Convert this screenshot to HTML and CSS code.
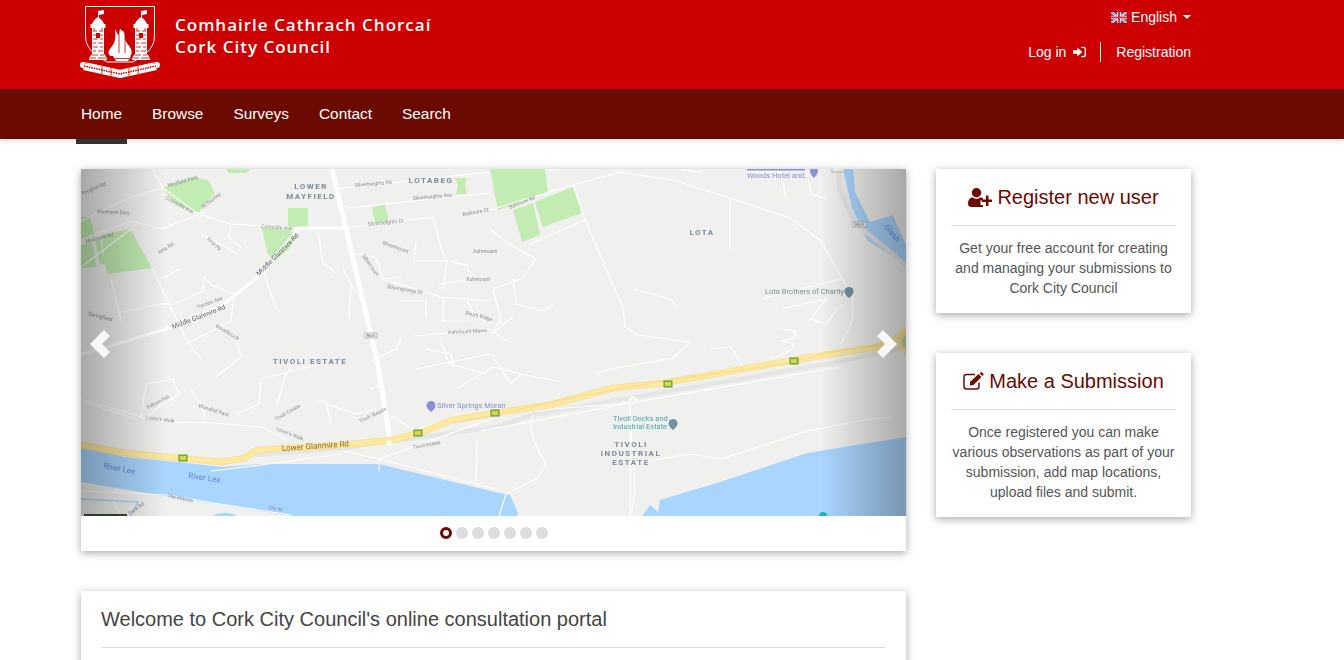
FILE: index.html
```html
<!DOCTYPE html>
<html lang="en">
<head>
<meta charset="utf-8">
<title>Cork City Council</title>
<link rel="stylesheet" href="styles.css">
</head>
<body>
<header class="top">
  <div class="wrap top-inner">
    <a class="brand" href="#">
      <svg class="crest" viewBox="0 0 80 72" width="80" height="72" aria-label="Cork City Council crest">
        <path class="crest-line" d="M5.500 .5H74.500V30C74.500 44 63 50 53 56H27C17 50 5.500 44 5.500 30Z"/>
        <g>
          <path class="crest-fill" d="M18 5l6-1v4l-5 1v3h-1z"/>
          <path class="crest-fill" d="M18 11c-3 2-5 4-6 7h12c-1-3-3-5-6-7zM10.500 18h15v4h-15zM12 22h12v26c2 2 3 4 3 6H9c0-2 1-4 3-6z"/>
          <path class="crest-cut" d="M13 25h4M19 25h4M13 29h3M18 29h5M13 33h5M20 33h3M13 37h3M18 37h5M13 41h5M20 41h3M13 45h3M18 45h5M12 49h6M20 49h4M10 52h6M18 52h8M14 22v3M22 22v3"/>
          <path class="crest-hole" d="M16 27h4v5h-4z"/>
        </g>
        <g transform="translate(43 0)">
          <path class="crest-fill" d="M18 5l6-1v4l-5 1v3h-1z"/>
          <path class="crest-fill" d="M18 11c-3 2-5 4-6 7h12c-1-3-3-5-6-7zM10.500 18h15v4h-15zM12 22h12v26c2 2 3 4 3 6H9c0-2 1-4 3-6z"/>
          <path class="crest-cut" d="M13 25h4M19 25h4M13 29h3M18 29h5M13 33h5M20 33h3M13 37h3M18 37h5M13 41h5M20 41h3M13 45h3M18 45h5M12 49h6M20 49h4M10 52h6M18 52h8M14 22v3M22 22v3"/>
          <path class="crest-hole" d="M16 27h4v5h-4z"/>
        </g>
        <path class="crest-fill" d="M35 23l3 6 1-1 1-5 4 3 1 7c1 4 4 6 6 10 1 3 1 6-1 7H31c-3-1-3-4-1-7 2-3 4-5 5-9 1-4 0-7 0-11z"/>
        <path class="crest-fill" d="M33 50h18l-3 5H36z"/>
        <path class="crest-cut" d="M35 52.500h14M39 27v20M45 31v16"/>
        <path class="scroll-band" d="M4 60L22 64 40 68 58 64 76 60"/>
        <circle class="crest-fill" cx="3" cy="59" r="3"/>
        <circle class="crest-fill" cx="77" cy="59" r="3"/>
        <path class="scroll-text" d="M4 60L22 64 40 68 58 64 76 60"/>
        <path class="crest-cut" d="M22 60v8M31 62v8M49 62v8M58 60v8M9 55l-4 3M71 55l4 3"/>
      </svg>
      <span class="brand-name"><span>Comhairle Cathrach Chorcaí</span><span>Cork City Council</span></span>
    </a>
    <div class="account">
      <a class="lang" href="#">
        <svg class="flag" viewBox="0 0 16 11" width="16" height="11" aria-hidden="true">
          <rect width="16" height="11" fill="#2b4a8c"/>
          <path d="M0 0L16 11M16 0L0 11" stroke="#fff" stroke-width="2.200"/>
          <path d="M0 0L16 11M16 0L0 11" stroke="#d8324a" stroke-width=".8"/>
          <path d="M8 0V11M0 5.500H16" stroke="#fff" stroke-width="3.600"/>
          <path d="M8 0V11M0 5.500H16" stroke="#d8324a" stroke-width="2"/>
        </svg>
        <span>English</span><i class="caret"></i>
      </a>
      <div class="auth">
        <a class="login" href="#">Log in
          <svg class="ico-login" viewBox="0 0 14 12" width="13" height="12" aria-hidden="true">
            <path d="M0 4H4.500V1.200L10 6 4.500 10.800V8H0z" fill="#fff"/>
            <path d="M9 1H11.500C12.600 1 13.300 1.800 13.300 3V9C13.300 10.200 12.600 11 11.500 11H9" fill="none" stroke="#fff" stroke-width="1.500"/>
          </svg>
        </a>
        <a class="register" href="#">Registration</a>
      </div>
    </div>
  </div>
</header>
<nav class="menu">
  <ul class="wrap menu-list">
    <li class="menu-item active"><a href="#">Home</a></li>
    <li class="menu-item"><a href="#">Browse</a></li>
    <li class="menu-item"><a href="#">Surveys</a></li>
    <li class="menu-item"><a href="#">Contact</a></li>
    <li class="menu-item"><a href="#">Search</a></li>
  </ul>
</nav>
<main class="wrap page">
  <div class="main-col">
    <section class="card carousel">
      <div class="slide">
        <svg class="map" viewBox="0 0 825 347" width="825" height="347" role="img" aria-label="Map of Tivoli and Lota, Cork">
          <rect class="land" width="825" height="347"/>
          <g class="blurred">
            <path class="park" d="M81 19L112 8 127 11 134 24 117 44 96 36ZM181 59L207 61 216 64 209 79 192 93 186 83ZM207 39H227V58H207ZM291 38L304 36 308 53 294 54ZM374 9H386L384 17 386 25H375L377 17ZM409 0H464L467 24 417 41ZM454 33L492 18 501 44 462 58ZM432 41L452 34 459 66 441 73ZM21 66L49 60 71 99 27 105 24 96ZM0 48H9L14 68 0 71ZM0 76L11 73 16 98 0 99ZM14 71L19 70 24 95 19 96ZM145 0H170L165 4 148 4Z"/>
            <path class="water" d="M0 279L44 288 97 293 141 298 181 295 298 295 414 323 429 326 437 344 436 347H211L77 326 0 313ZM561 347L569 336 577 343 579 331 639 313 726 284 825 268V347ZM762 0H772L774 23 789 53 812 46 825 76V96L786 71 771 39ZM132 347C136 343 152 343 156 347Z"/>
            <path class="water-line" d="M0 330L57 333 50 347"/>

            <g class="road-grey">
              <path d="M174 286L261 279 414 258 452 246 549 229 752 194 825 178"/>
              <path d="M758 0V20L775 55 825 96"/>
            </g>
            <g class="road-big">
              <path d="M251 0L297 196 309 271"/>
              <path d="M-1 186L92 158 142 136 179 106 216 61"/>
              <path d="M216 59H262"/>
            </g>
            <g class="road">
              <path d="M71 0L82 19 116 44 149 55 216 59M262 59L352 48M256 20L409 3M266 39L409 24"/>
              <path d="M0 52L50 28 82 19M0 71L50 52 80 60 124 43M0 98L50 60M71 99L105 170 120 190M80 110L99 100M94 135L122 122 123 108 131 116 153 125M105 175L150 152 153 125M30 110L40 152M36 144L80 135 92 135"/>
              <path d="M120 65L157 85M150 60L147 68 160 78 156 82M180 95L195 140M237 64L242 94 255 104M262 100L275 125M270 118L268 150M135 160L155 168 160 188 135 208"/>
              <path d="M352 48L362 85 366 92 362 120M335 72L333 92 366 92M275 85L295 88 302 110 320 108M300 110L335 120 360 128 409 132M368 92L386 96 391 110 358 115M320 132H345V150M362 128V152H385M386 132L395 148 412 154M333 167L409 160 425 172M345 180L370 185 372 195M290 192L315 180 320 170"/>
              <path d="M0 230L60 248 90 253 135 254 180 258 205 270M0 232L55 250M60 248L65 215 92 210 98 225 75 240 64 250M110 220L122 240 125 250M155 245L178 235 180 210 240 195M196 235L205 205 218 190M235 232H245L250 255M245 235L275 245 295 240M290 220L302 215"/>
              <path d="M310 247L335 262M309 270L380 245M335 200L410 185 430 215 440 205 475 212M360 172L368 195 405 205M375 220L412 198 440 205"/>
              <path d="M409 41L492 16 539 3 592 11 649 29 709 49 739 71 772 129 771 152 760 175M492 16L504 51 542 139 544 158 556 166 609 173 592 189 530 200 515 205M504 51L447 76M464 0L480 0M409 60L428 75 455 90 440 110 412 120 420 150 410 165 432 148M432 110L435 135 462 142 472 135M600 0L620 4M649 29V80M665 3L700 3 705 30M726 3L730 25 745 30M552 120L590 130 597 140M700 160C720 160 720 170 700 172 730 175 700 185 690 190M628 180L650 178 660 195"/>
              <path d="M0 322L87 326 132 334 210 346M32 332L40 347M409 245L549 234M549 234L759 198M400 262L549 234 540 232M549 234C549 290 550 310 549 347 560 310 549 290 549 234M452 246C445 265 460 285 465 295L455 310 425 325M425 325L418 347M549 295L610 285 640 290 726 262 790 250 810 248M298 302L298 290M261 282L298 290 410 250M298 290L414 320M396 272L395 312M130 302L180 296 260 285"/>
              <path d="M680 130L760 110M700 140L745 130 730 150 745 155 760 135"/>
            </g>
            <path class="motorway-edge" d="M0 276L44 284 97 289 141 293 164 289 176 281 261 276 311 271 341 263 371 251 414 244 469 236 532 219 582 214 702 193 756 184 796 178 815 170 825 160"/>
            <path class="motorway" d="M0 276L44 284 97 289 141 293 164 289 176 281 261 276 311 271 341 263 371 251 414 244 469 236 532 219 582 214 702 193 756 184 796 178 815 170 825 160"/>
            <path class="motorway-line" d="M370 254L414 246 469 233 532 221 582 212 702 195 756 182 800 176"/>
            <circle class="roundabout" cx="830" cy="173" r="11"/>
            <circle class="junction" cx="308" cy="274" r="2.500"/>
            <circle class="junction-ring" cx="552" cy="231" r="3"/>
            <rect class="bar-dark" x="3" y="345" width="43" height="2"/>

            <g class="shield">
              <rect x="98" y="286" width="8" height="6"/><text x="102" y="291">N8</text>
              <rect x="333" y="261" width="8" height="6"/><text x="337" y="266">N8</text>
              <rect x="410" y="241" width="8" height="6"/><text x="414" y="246">N8</text>
              <rect x="583" y="212" width="8" height="6"/><text x="587" y="217">N8</text>
              <rect x="709" y="189" width="8" height="6"/><text x="713" y="194">N8</text>
            </g>
            <g class="shield-r">
              <rect x="284" y="164" width="12" height="5"/><text x="290" y="168">R635</text>
              <rect x="772" y="53" width="13" height="5"/><text x="778.500" y="57">R639</text>
              <rect x="751" y="-2" width="13" height="5"/>
            </g>
            <g class="district">
              <text x="230" y="20">LOWER</text><text x="230" y="30">MAYFIELD</text>
              <text x="350" y="14">LOTABEG</text><text x="229" y="195">TIVOLI ESTATE</text>
              <text x="621" y="66">LOTA</text>
              <text x="550" y="278">TIVOLI</text><text x="550" y="287">INDUSTRIAL</text><text x="550" y="296">ESTATE</text>
            </g>
            <g class="street">
              <text transform="translate(92 160) rotate(-21)">Middle Glanmire Rd</text>
              <text transform="translate(178 107) rotate(-45)">Middle Glanmire Rd</text>
            </g>
            <g class="lane">
              <text transform="translate(1 26) rotate(-22)">Youghal Rd</text>
              <text transform="translate(16 44) rotate(3)">Murmont Dws</text>
              <text transform="translate(5 74) rotate(-14)">Murmont Rd</text>
              <text transform="translate(87 18) rotate(-15)">Mayfield Park</text>
              <text transform="translate(84 30) rotate(28)">Colmcille Ave</text>
              <text transform="translate(180 59) rotate(4)">Colmcille Ave</text>
              <text transform="translate(122 40) rotate(-38)">St Stanley</text>
              <text transform="translate(78 85) rotate(-30)">Iona Rd</text>
              <text transform="translate(126 70) rotate(45)">Iona Pk</text>
              <text transform="translate(116 140) rotate(-20)">Tracton Ave</text>
              <text transform="translate(7 146) rotate(15)">Springfield</text>
              <text transform="translate(134 158) rotate(30)">Woodbrook</text>
              <text transform="translate(274 18) rotate(-5)">Silverheights Rd</text>
              <text transform="translate(332 31) rotate(-5)">Silverheights Ave</text>
              <text transform="translate(287 57) rotate(-6)">Silverheights Dr</text>
              <text transform="translate(382 47) rotate(-10)">Ballinure Ct</text>
              <text transform="translate(301 75) rotate(20)">Silvermount</text>
              <text transform="translate(281 87) rotate(55)">Silvercourt</text>
              <text transform="translate(306 119) rotate(10)">Silversprings Dr</text>
              <text transform="translate(392 84)">Ashmount</text>
              <text transform="translate(385 112)">Ashmount</text>
              <text transform="translate(384 145) rotate(15)">South Ridge</text>
              <text transform="translate(367 165) rotate(-3)">Ashmount Mews</text>
              <text transform="translate(429 40) rotate(-22)">Ballinure Rd</text>
              <text transform="translate(67 240) rotate(-27)">Falcon Hill</text>
              <text transform="translate(117 238) rotate(18)">Woodhill Park</text>
              <text transform="translate(65 250) rotate(8)">Lover's Walk</text>
              <text transform="translate(195 261) rotate(22)">Lover's Walk</text>
              <text transform="translate(195 252) rotate(-30)">Tivoli Estate</text>
              <text transform="translate(279 254) rotate(-25)">Tivoli Woods</text>
              <text transform="translate(332 280) rotate(-10)">Tivoli Estate</text>
              <text transform="translate(86 328) rotate(12)">The Marina</text>
              <text transform="translate(187 340) rotate(10)">The M</text>
              <text transform="translate(49 346) rotate(-35)">Park Rd</text>
            </g>
            <text class="glanmire" transform="translate(201 282) rotate(-4)">Lower Glanmire Rd</text>
            <g class="river">
              <text transform="translate(22 299) rotate(11)">River Lee</text>
              <text transform="translate(107 309) rotate(8)">River Lee</text>
              <text transform="translate(803 58) rotate(52)">Glash</text>
            </g>
            <g class="poi-hotel">
              <text x="666" y="9">Woods Hotel and...</text>
              <rect x="666" y="0" width="58" height="1.500"/>
              <text x="356" y="239">Silver Springs Moran</text>
              <path d="M733 -2a4 4 0 0 1 4 4c0 3-4 7-4 7s-4-4-4-7a4 4 0 0 1 4-4z"/>
              <path d="M350 232a4.500 4.500 0 0 1 4.500 4.500c0 3-4.500 6.500-4.500 6.500s-4.500-3.500-4.500-6.500a4.500 4.500 0 0 1 4.500-4.500z"/>
            </g>
            <g class="poi-dock">
              <text x="532" y="252">Tivoli Docks and</text>
              <text x="532" y="260">Industrial Estate</text>
              <circle cx="742" cy="347" r="4"/>
            </g>
            <g class="poi-grey">
              <text x="684" y="125">Lota Brothers of Charity</text>
              <path d="M768 118a4.500 4.500 0 0 1 4.500 4.500c0 3-4.500 6.500-4.500 6.500s-4.500-3.500-4.500-6.500a4.500 4.500 0 0 1 4.500-4.500z"/>
              <path d="M592 250a4.500 4.500 0 0 1 4.500 4.500c0 3-4.500 6.500-4.500 6.500s-4.500-3.500-4.500-6.500a4.500 4.500 0 0 1 4.500-4.500z"/>
            </g>
          </g>
        </svg>
        <a class="control control-left" href="#" aria-label="Previous">
          <svg viewBox="0 0 20 28" width="20" height="28" aria-hidden="true"><path d="M14 0L20 6 12 14 20 22 14 28 0 14Z"/></svg>
        </a>
        <a class="control control-right" href="#" aria-label="Next">
          <svg viewBox="0 0 20 28" width="20" height="28" aria-hidden="true"><path d="M6 0L0 6 8 14 0 22 6 28 20 14Z"/></svg>
        </a>
      </div>
      <div class="dots">
        <span class="dot on"></span><span class="dot"></span><span class="dot"></span><span class="dot"></span><span class="dot"></span><span class="dot"></span><span class="dot"></span>
      </div>
    </section>
    <section class="card welcome">
      <h1 class="welcome-title">Welcome to Cork City Council's online consultation portal</h1>
      <hr class="rule">
    </section>
  </div>
  <aside class="side-col">
    <section class="card promo">
      <h2 class="promo-title">
        <svg viewBox="0 0 24 19" width="24" height="19" aria-hidden="true">
          <circle cx="8.500" cy="4.700" r="4.700"/>
          <path d="M0 15.500C0 12 2 9.800 4.500 9.300 6 10.600 7.200 11 8.500 11S11 10.600 12.500 9.300C13.500 9.500 14.300 10 15 10.600V12.500H12.500V17H15V19H3C1 19 0 17.500 0 15.500Z"/>
          <path d="M18 7.500H20.500V11.500H24V14H20.500V18H18V14H14V11.500H18Z"/>
        </svg>
        <span>Register new user</span>
      </h2>
      <hr class="rule">
      <p class="promo-text">Get your free account for creating and managing your submissions to Cork City Council</p>
    </section>
    <section class="card promo">
      <h2 class="promo-title">
        <svg viewBox="0 0 21 18" width="21" height="18" aria-hidden="true">
          <path class="edit-box" d="M16 10.500V14.500C16 16 15 17 13.500 17H3.500C2 17 1 16 1 14.500V5C1 3.500 2 2.500 3.500 2.500H12"/>
          <path d="M7 10L15.500 2 18.500 5 10.500 13 7 13.500Z"/>
          <path d="M16.500 1.200L17.500 .4C18 0 18.500 .1 19 .5L20.300 1.800C20.700 2.200 20.700 2.800 20.300 3.200L19.500 4Z"/>
        </svg>
        <span>Make a Submission</span>
      </h2>
      <hr class="rule">
      <p class="promo-text">Once registered you can make various observations as part of your submission, add map locations, upload files and submit.</p>
    </section>
  </aside>
</main>
</body>
</html>
```
FILE: styles.css
```css
* { box-sizing: border-box; }
html, body { height: 660px; overflow: hidden; }
body { margin: 0; background: #fff; font-family: "Liberation Sans", Arial, sans-serif; font-size: 14px; color: #555; }
a { color: inherit; text-decoration: none; }

.wrap { width: 1140px; margin-left: 66px; padding: 0 15px; }

.top { height: 89px; background: #cc0000; color: #fff; }
.top-inner { display: flex; justify-content: space-between; height: 89px; }
.brand { display: flex; align-items: flex-start; gap: 15px; margin-left: -1px; padding-top: 6px; }
.crest { display: block; flex: none; }
.crest-line { fill: none; stroke: #fff; stroke-width: 1; }
.crest-fill { fill: #fff; }
.crest-cut { fill: none; stroke: #cc0000; stroke-width: .8; }
.crest-hole { fill: #cc0000; }
.scroll-band { fill: none; stroke: #fff; stroke-width: 8; }
.scroll-text { fill: none; stroke: #cc0000; stroke-width: 1.600; stroke-dasharray: 1.500 1; }
.brand-name { display: flex; flex-direction: column; padding-top: 8px; font-family: "Open Sans", sans-serif; font-size: 17px; font-weight: 600; line-height: 22px; letter-spacing: 1px; white-space: nowrap; }

.account { display: flex; flex-direction: column; align-items: flex-end; }
.lang { display: flex; align-items: center; height: 20px; margin-top: 7px; }
.flag { display: block; margin-right: 4px; }
.caret { width: 0; height: 0; margin-left: 6px; border-top: 4px solid #fff; border-left: 4px solid transparent; border-right: 4px solid transparent; }
.auth { display: flex; align-items: center; height: 20px; margin-top: 15px; }
.login { display: flex; align-items: center; gap: 7px; padding-right: 14px; border-right: 1px solid #fff; height: 20px; }
.register { padding-left: 15px; }
.ico-login { display: block; }

.menu { height: 50px; background: #6b0a00; box-shadow: 0 2px 4px rgba(0, 0, 0, .15); }
.menu-list { display: flex; list-style: none; margin-top: 0; margin-bottom: 0; padding: 0; }
.menu-item { position: relative; margin-left: 10px; margin-right: 10px; padding: 0 5px; font-size: 15.400px; line-height: 50px; color: #fff; }
.menu-item.active::after { content: ""; position: absolute; left: 0; right: 0; top: 50px; height: 5px; background: #333; }

.page { display: flex; gap: 30px; padding-top: 30px; }
.main-col { width: 825px; flex: none; display: flex; flex-direction: column; gap: 40px; }
.side-col { width: 255px; flex: none; display: flex; flex-direction: column; gap: 40px; }
.card { background: #fff; box-shadow: 0 2px 8px rgba(0, 0, 0, .35); }

.slide { position: relative; height: 347px; overflow: hidden; }
.map { display: block; }
.land { fill: #f0f0ef; }
.blurred { filter: blur(.45px); }
.park { fill: #c3ecb2; }
.water { fill: #aad6fe; }
.water-line { fill: none; stroke: #aad6fe; stroke-width: 1.500; }
.road-big path { fill: none; stroke: #fff; stroke-width: 3; stroke-linejoin: round; }
.road-big path:first-child { stroke-width: 5; }
.road path { fill: none; stroke: #fff; stroke-width: 1.200; stroke-linejoin: round; }
.road-grey path { fill: none; stroke: #e6e6e6; stroke-width: 4.500; stroke-linejoin: round; }
.motorway-edge { fill: none; stroke: #f8dd8a; stroke-width: 6.500; stroke-linejoin: round; }
.motorway { fill: none; stroke: #fde9a0; stroke-width: 5.200; stroke-linejoin: round; }
.motorway-line { fill: none; stroke: #f5d67e; stroke-width: .7; }
.roundabout { fill: #b7d8a4; stroke: #fde49a; stroke-width: 4; }
.junction { fill: #fff; }
.junction-ring { fill: #f0f0ef; stroke: #fff; stroke-width: 1.500; }
.bar-dark { fill: #3d4a3a; }
.shield rect { fill: #a9ba1e; stroke: #5a9c40; stroke-width: 1; }
.shield text { font-family: Roboto, sans-serif; font-size: 4.500px; font-weight: 700; fill: #f3f07a; text-anchor: middle; }
.shield-r rect { fill: #f3f3f3; stroke: #999; stroke-width: .6; }
.shield-r text { font-family: Roboto, sans-serif; font-size: 3.800px; fill: #666; text-anchor: middle; }
.district text { font-family: Roboto, sans-serif; font-size: 8px; font-weight: 700; letter-spacing: 1.500px; fill: #7c8a9e; text-anchor: middle; }
.street text { font-family: Roboto, sans-serif; font-size: 6.500px; fill: #5c6066; }
.lane text { font-family: Roboto, sans-serif; font-size: 5.200px; fill: #8b8e92; }
.glanmire { font-family: Roboto, sans-serif; font-size: 8px; fill: #8c6a34; }
.river text { font-family: Roboto, sans-serif; font-size: 8px; fill: #5f8cd6; }
.poi-hotel text { font-family: Roboto, sans-serif; font-size: 7.500px; fill: #8b8fd4; }
.poi-hotel path, .poi-hotel rect { fill: #8b8fd4; }
.poi-dock text { font-family: Roboto, sans-serif; font-size: 7.500px; fill: #44a6ac; }
.poi-dock circle { fill: #22b5b5; }
.poi-grey text { font-family: Roboto, sans-serif; font-size: 7.500px; fill: #75909f; }
.poi-grey path { fill: #75909f; }

.control { position: absolute; top: 0; bottom: 0; width: 85px; display: flex; align-items: center; }
.control svg { display: block; margin-top: 3px; fill: #fff; opacity: .9; }
.control-left { left: 0; justify-content: flex-start; padding-left: 9px; background: linear-gradient(to right, rgba(0, 0, 0, .3), rgba(0, 0, 0, 0)); }
.control-right { right: 0; justify-content: flex-end; padding-right: 9px; background: linear-gradient(to left, rgba(0, 0, 0, .3), rgba(0, 0, 0, 0)); }

.dots { display: flex; justify-content: center; align-items: center; gap: 4px; height: 35px; padding-bottom: 1px; }
.dot { width: 12px; height: 12px; border-radius: 50%; background: #ddd; }
.dot.on { background: #fff; border: 3px solid #6b0a00; }

.rule { height: 1px; margin: 0; border: 0; background: #ddd; }
.welcome { padding: 14px 20px 40px; }
.welcome-title { margin: 0; font-size: 20px; font-weight: 400; line-height: 28px; color: #444; }
.welcome .rule { margin-top: 14px; }

.promo { padding: 14px 15px 15px; text-align: center; }
.promo-title { display: flex; justify-content: center; align-items: center; gap: 5px; height: 28px; margin: 0 0 14px; font-size: 20px; font-weight: 400; color: #6b0a00; white-space: nowrap; }
.promo-title svg { display: block; fill: #6b0a00; }
.edit-box { fill: none !important; stroke: #6b0a00; stroke-width: 1.500; }
.promo-text { margin: 12px 0 0; line-height: 20px; color: #555; }
```
